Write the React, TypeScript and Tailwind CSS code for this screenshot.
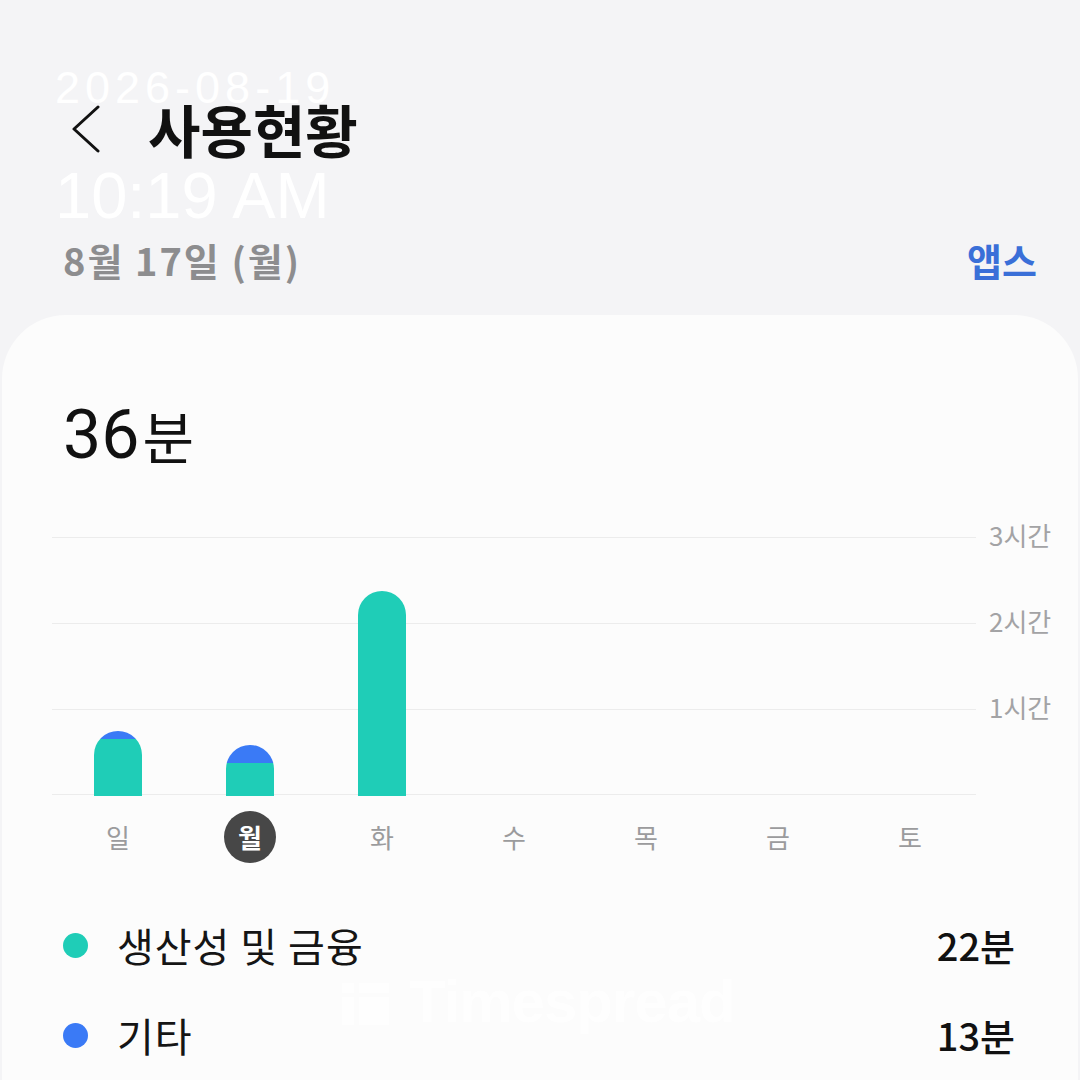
import React from "react";

const days = ["일", "월", "화", "수", "목", "금", "토"];
const bars: { teal: number; blue: number }[] = [
  { teal: 57, blue: 8 },
  { teal: 33, blue: 18 },
  { teal: 205, blue: 0 },
  { teal: 0, blue: 0 },
  { teal: 0, blue: 0 },
  { teal: 0, blue: 0 },
  { teal: 0, blue: 0 },
];

export default function App() {
  const kr = { fontFamily: '"Noto Sans CJK KR", "Noto Sans", sans-serif' };
  return (
    <div className="relative w-[1080px] h-[1080px] overflow-hidden bg-[#f4f4f6]" style={kr}>
      {/* header */}
      <div className="flex flex-col pt-[92px] px-[63px]">
        <div className="flex items-center h-[72px]">
          <svg width="40" height="50" viewBox="0 0 40 50" className="ml-[2px]">
            <path d="M33 4 L9 26 L33 48" fill="none" stroke="#111" strokeWidth="3" strokeLinecap="round" strokeLinejoin="round" />
          </svg>
          <div className="ml-[43px] text-[57px] font-bold text-[#111] leading-none">사용현황</div>
        </div>
        <div className="flex items-center justify-between mt-[72px] h-[48px]">
          <div className="text-[38px] font-semibold text-[#8d8d8f] leading-none tracking-[2px]">8월 17일 (월)</div>
          <div className="text-[38px] font-semibold text-[#3a6fd8] leading-none mr-[-20px]">앱스</div>
        </div>
      </div>

      {/* card */}
      <div className="mt-[31px] mx-[2px] h-[800px] rounded-t-[64px] bg-[#fcfcfc] flex flex-col">
        <div className="pl-[61px] pt-[86px] h-[154px] flex items-end leading-none text-[#111]" style={{ fontFamily: 'Roboto, "Noto Sans CJK KR", sans-serif' }}>
          <span className="text-[68px]">36</span>
          <span className="text-[56px] ml-[3px] mb-[6px]" style={kr}>분</span>
        </div>

        {/* chart */}
        <div className="flex mt-[68px] ml-[50px]">
          <div className="grid w-[924px]">
            <div className="col-start-1 row-start-1 flex flex-col">
              <div className="h-[86px] border-t border-[#ececec]" />
              <div className="h-[86px] border-t border-[#ececec]" />
              <div className="h-[86px] border-t border-b border-[#ececec]" />
            </div>
            <div className="col-start-1 row-start-1 flex items-end h-[259px]">
              {bars.map((b, i) => (
                <div key={i} className="w-[132px] flex justify-center">
                  {b.teal + b.blue > 0 && (
                    <div className="w-[48px] rounded-t-full overflow-hidden flex flex-col">
                      {b.blue > 0 && <div className="bg-[#3a7af6]" style={{ height: b.blue }} />}
                      <div className="bg-[#1fcdb7]" style={{ height: b.teal }} />
                    </div>
                  )}
                </div>
              ))}
            </div>
          </div>
          <div className="flex flex-col ml-[13px] mt-[-15px] text-[26px] text-[#a3a3a5] leading-none">
            <div className="h-[86px]">3시간</div>
            <div className="h-[86px]">2시간</div>
            <div className="h-[86px]">1시간</div>
          </div>
        </div>

        <div className="flex ml-[50px] w-[924px] mt-[15px]">
          {days.map((d, i) => (
            <div key={d} className="w-[132px] flex justify-center">
              {i === 1 ? (
                <div className="w-[52px] h-[52px] rounded-full bg-[#474747] flex items-center justify-center text-white text-[26px] font-bold leading-none">
                  {d}
                </div>
              ) : (
                <div className="h-[52px] flex items-center text-[26px] text-[#9b9b9d] leading-none">{d}</div>
              )}
            </div>
          ))}
        </div>

        {/* legend */}
        <div className="flex flex-col mt-[56px] pl-[61px] pr-[63px]">
          <div className="flex items-center h-[52px]">
            <div className="w-[25px] h-[25px] rounded-full bg-[#1fcdb7]" />
            <div className="ml-[29px] text-[40px] text-[#151515] leading-none tracking-[1px]">생산성 및 금융</div>
            <div className="ml-auto text-[38px] font-medium text-[#111] leading-none">22분</div>
          </div>
          <div className="flex items-center h-[52px] mt-[38px]">
            <div className="w-[25px] h-[25px] rounded-full bg-[#3a7af6]" />
            <div className="ml-[29px] text-[40px] text-[#151515] leading-none tracking-[1px]">기타</div>
            <div className="ml-auto text-[38px] font-medium text-[#111] leading-none">13분</div>
          </div>
        </div>
      </div>

      {/* timestamp overlay */}
      <div className="absolute left-[55px] top-[65px] text-white leading-none" style={{ fontFamily: '"Liberation Sans", Arial, sans-serif' }}>
        <div className="text-[45px] tracking-[5px]">2026-08-19</div>
        <div className="text-[65px] mt-[53px]">10:19 AM</div>
      </div>

      {/* watermark */}
      <div className="absolute left-[342px] top-[972px] flex items-center gap-[20px] text-white opacity-90">
        <div className="flex items-end gap-[5px] h-[46px]">
          <div className="flex flex-col gap-[4px]">
            <div className="w-[12px] h-[10px] bg-white" />
            <div className="w-[12px] h-[28px] bg-white" />
          </div>
          <div className="flex flex-col gap-[4px]">
            <div className="w-[30px] h-[10px] bg-white" />
            <div className="w-[30px] h-[28px] bg-white" />
          </div>
        </div>
        <div className="text-[60px] font-bold leading-none tracking-[-1px]" style={{ fontFamily: '"Liberation Sans", Arial, sans-serif' }}>Timespread</div>
      </div>
    </div>
  );
}
